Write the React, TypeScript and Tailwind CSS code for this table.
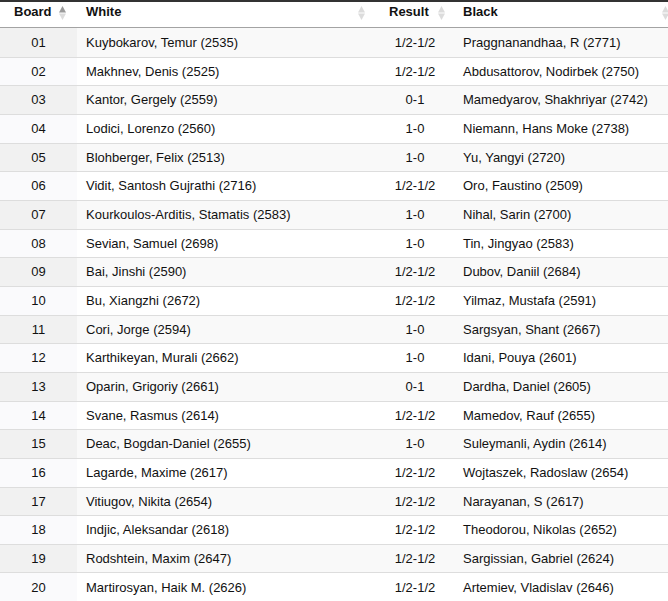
import React from "react"

type Pairing = [string, string, string, string]

const pairings: Pairing[] = [
  ["01", "Kuybokarov, Temur (2535)", "1/2-1/2", "Praggnanandhaa, R (2771)"],
  ["02", "Makhnev, Denis (2525)", "1/2-1/2", "Abdusattorov, Nodirbek (2750)"],
  ["03", "Kantor, Gergely (2559)", "0-1", "Mamedyarov, Shakhriyar (2742)"],
  ["04", "Lodici, Lorenzo (2560)", "1-0", "Niemann, Hans Moke (2738)"],
  ["05", "Blohberger, Felix (2513)", "1-0", "Yu, Yangyi (2720)"],
  ["06", "Vidit, Santosh Gujrathi (2716)", "1/2-1/2", "Oro, Faustino (2509)"],
  ["07", "Kourkoulos-Arditis, Stamatis (2583)", "1-0", "Nihal, Sarin (2700)"],
  ["08", "Sevian, Samuel (2698)", "1-0", "Tin, Jingyao (2583)"],
  ["09", "Bai, Jinshi (2590)", "1/2-1/2", "Dubov, Daniil (2684)"],
  ["10", "Bu, Xiangzhi (2672)", "1/2-1/2", "Yilmaz, Mustafa (2591)"],
  ["11", "Cori, Jorge (2594)", "1-0", "Sargsyan, Shant (2667)"],
  ["12", "Karthikeyan, Murali (2662)", "1-0", "Idani, Pouya (2601)"],
  ["13", "Oparin, Grigoriy (2661)", "0-1", "Dardha, Daniel (2605)"],
  ["14", "Svane, Rasmus (2614)", "1/2-1/2", "Mamedov, Rauf (2655)"],
  ["15", "Deac, Bogdan-Daniel (2655)", "1-0", "Suleymanli, Aydin (2614)"],
  ["16", "Lagarde, Maxime (2617)", "1/2-1/2", "Wojtaszek, Radoslaw (2654)"],
  ["17", "Vitiugov, Nikita (2654)", "1/2-1/2", "Narayanan, S (2617)"],
  ["18", "Indjic, Aleksandar (2618)", "1/2-1/2", "Theodorou, Nikolas (2652)"],
  ["19", "Rodshtein, Maxim (2647)", "1/2-1/2", "Sargissian, Gabriel (2624)"],
  ["20", "Martirosyan, Haik M. (2626)", "1/2-1/2", "Artemiev, Vladislav (2646)"],
]

function SortIcon({ active }: { active?: boolean }) {
  return (
    <svg width="7" height="14" viewBox="0 0 7 14">
      <polygon points="3.5,0 7,6.5 0,6.5" fill={active ? "#9a9a9a" : "#dcdcdc"} />
      <polygon points="0,7.5 7,7.5 3.5,14" fill="#dcdcdc" />
    </svg>
  )
}

const cols = "grid grid-cols-[77px_303px_73px_230px]"

export default function App() {
  return (
    <div className="w-[668px] h-[601px] overflow-hidden bg-white font-['Liberation_Sans',Arial,sans-serif] text-[13px] text-[#111]">
      <div className="w-[683px] border-t-2 border-[#333]">
        {/* Header */}
        <div className={`${cols} h-[26px] border-b border-[#a3a3a3] font-bold text-[#111]`}>
          <div className="relative flex items-center pb-[5px] pl-[14px]">
            Board
            <span className="absolute left-[59px] top-[4px]"><SortIcon active /></span>
          </div>
          <div className="relative flex items-center pb-[5px] pl-[9px]">
            White
            <span className="absolute left-[281px] top-[4px]"><SortIcon /></span>
          </div>
          <div className="relative flex items-center pb-[5px] pl-[9px]">
            Result
            <span className="absolute left-[58px] top-[4px]"><SortIcon /></span>
          </div>
          <div className="relative flex items-center pb-[5px] pl-[10px]">
            Black
            <span className="absolute left-[209px] top-[4px]"><SortIcon /></span>
          </div>
        </div>

        {/* Rows */}
        {pairings.map(([board, white, result, black], i) => {
          const odd = i % 2 === 0
          return (
            <div
              key={board}
              className={`${cols} h-[28.66px] ${i > 0 ? "border-t border-[#dddddd]" : ""} ${odd ? "bg-[#f9f9f9]" : "bg-white"}`}
            >
              <div className={`flex items-center justify-center ${odd ? "bg-[#f1f1f1]" : "bg-[#fafafc]"}`}>{board}</div>
              <div className="flex items-center pl-[9px] whitespace-nowrap">{white}</div>
              <div className="flex items-center justify-center pr-[3px]">{result}</div>
              <div className="flex items-center pl-[10px] whitespace-nowrap">{black}</div>
            </div>
          )
        })}
      </div>
    </div>
  )
}
